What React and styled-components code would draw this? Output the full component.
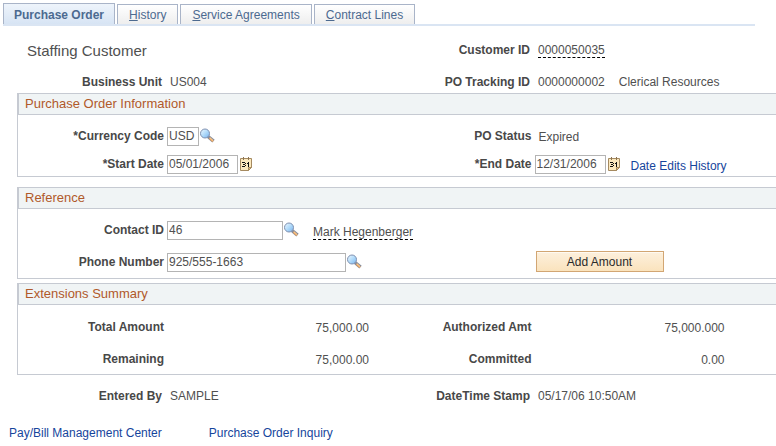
import React from 'react'
import styled, { createGlobalStyle } from 'styled-components'

const colors = {
  text: '#505050',
  label: '#484848',
  link: '#16459c',
  tab: '#4c6a90',
  heading: '#b0592a',
  border: '#c6cad2',
  field: '#b4b4b4',
}

const GlobalStyle = createGlobalStyle`
  * {
    box-sizing: border-box;
  }
  body {
    margin: 0;
    background: #fff;
    color: ${colors.text};
    font: 12px/16px "Liberation Sans", Arial, sans-serif;
  }
`

const Page = styled.div`
  overflow: hidden;
`

const Tabs = styled.nav`
  display: flex;
  align-items: flex-end;
  gap: 2px;
  margin: 3px 21px 0 3px;
  border-bottom: 2px solid #dae5f3;
`

const Tab = styled.a`
  height: ${props => (props.$active ? 21 : 20)}px;
  padding: ${props => (props.$active ? '3px 10px 0' : '2px 11px 0')};
  border: 1px solid #a9b4c8;
  border-bottom: 0;
  background: ${props =>
    props.$active
      ? 'linear-gradient(#eef4fb, #d7e4f4)'
      : 'linear-gradient(#ffffff, #eeeeee)'};
  color: ${colors.tab};
  font-weight: ${props => (props.$active ? 700 : 400)};
  text-decoration: none;
  white-space: nowrap;
`

const Content = styled.main`
  padding-left: 17px;
`

const Row = styled.div`
  display: grid;
  grid-template-columns: 148px 220fr 148px 243fr;
  align-items: center;
  min-height: 22px;
`

const Header = styled.header`
  display: grid;
  gap: 10px;
  padding: 13px 0 0;
`

const Title = styled.h1`
  grid-column: span 2;
  margin: 0;
  padding: 1px 0 0 10px;
  font-size: 15px;
  font-weight: 400;
  line-height: 20px;
`

const Label = styled.label`
  padding-right: ${props => (props.$plain ? 3 : 2)}px;
  color: ${colors.label};
  font-weight: 700;
  text-align: right;
  white-space: nowrap;
`

const Field = styled.div`
  display: flex;
  align-items: center;
  padding-left: ${props => (props.$text ? 5 : 1)}px;
  padding-top: ${props => (props.$low ? 2 : 0)}px;
  white-space: nowrap;
`

const Spaced = styled.span`
  margin-left: ${props => props.$space || 14}px;
  padding-top: ${props => (props.$low ? 4 : 0)}px;
`

const Dashed = styled.span`
  display: inline-block;
  border-bottom: 1px dashed #000;
  line-height: 14px;
`

const Panel = styled.section`
  margin-bottom: ${props => props.$gap}px;
  border: 1px solid ${colors.border};
  border-right: 0;
`

const PanelTitle = styled.h2`
  height: 21px;
  margin: 0;
  padding: 2px 0 0 6px;
  border-left: 1px solid ${colors.border};
  border-bottom: 1px solid ${colors.border};
  background: #f0f4f5;
  color: ${colors.heading};
  font-size: 13px;
  font-weight: 400;
`

const PanelBody = styled.div`
  display: grid;
  gap: ${props => props.$gap}px;
  padding: ${props => props.$top || 10}px 0 ${props => props.$bottom}px;
`

const TextInput = styled.input`
  width: ${props => props.$width}px;
  height: 19px;
  padding: 0 1px;
  border: 1px solid ${colors.field};
  background: #fff;
  color: ${colors.text};
  font: inherit;
`

const IconButton = styled.button`
  display: flex;
  padding: 0;
  border: 0;
  background: none;
`

const ActionButton = styled.button`
  width: 128px;
  height: 21px;
  margin-left: 1px;
  padding: 0;
  border: 1px solid #d2a673;
  background: linear-gradient(#fdf0dd, #fae3bd);
  box-shadow: inset 0 1px #fffaf2;
  color: #2a2a2a;
  font: inherit;
`

const ButtonField = styled.div`
  align-self: start;
  display: flex;
  padding-left: 1px;
`

const Link = styled.a`
  color: ${colors.link};
  text-decoration: none;
`

const Amount = styled.output`
  width: ${props => props.$width}px;
  text-align: right;
`

const FooterLinks = styled.footer`
  display: flex;
  gap: 47px;
  padding: 18px 9px 4px;
`

const LookupIcon = () => (
  <svg width="16" height="16" viewBox="0 0 16 16" aria-hidden="true">
    <defs>
      <linearGradient id="lens" x1="0" y1="0" x2="1" y2="1">
        <stop offset="0" stopColor="#eef8ff" />
        <stop offset="0.5" stopColor="#b2dbfa" />
        <stop offset="1" stopColor="#75b2ee" />
      </linearGradient>
    </defs>
    <path d="M9 8.500l5.500 4.700" stroke="#858c9c" strokeWidth="3.600" />
    <path d="M10.500 10l3.600 3.200" stroke="#eda660" strokeWidth="2" />
    <path d="M10.800 9.600l3.300 3" stroke="#f8dcae" strokeWidth="0.800" />
    <circle cx="6" cy="5.500" r="4.500" fill="url(#lens)" stroke="#7f90b0" />
  </svg>
)

const CalendarIcon = () => (
  <svg width="16" height="16" viewBox="0 0 16 16" aria-hidden="true">
    <path d="M2.5 2.5h11v9l-3 3h-8z" fill="#fbe8bd" stroke="#a58a60" />
    <path d="M10.5 14.5v-3h3z" fill="#e2bf7d" stroke="#a58a60" />
    <path d="M5.500 1v3M10.500 1v3" stroke="#8d7554" />
    <path
      d="M4 6h3v1H4zM7 7h1v1H7zM5 8h2v1H5zM7 9h1v1H7zM4 10h3v1H4zM10 6h1v5h-1zM9 7h1v1H9z"
      fill="#111"
      shapeRendering="crispEdges"
    />
  </svg>
)

const Lookup = ({ label }) => (
  <IconButton type="button" aria-label={label}>
    <LookupIcon />
  </IconButton>
)

const Calendar = ({ label }) => (
  <IconButton type="button" aria-label={label}>
    <CalendarIcon />
  </IconButton>
)

const tabs = ['History', 'Service Agreements', 'Contract Lines']

const App = () => (
  <>
    <GlobalStyle />
    <Page>
      <Tabs>
        <Tab href="#order" $active>Purchase Order</Tab>
        {tabs.map(name => (
          <Tab href="#tab" key={name}>
            <u>{name[0]}</u>
            {name.slice(1)}
          </Tab>
        ))}
      </Tabs>
      <Content>
        <Header>
          <Row>
            <Title>Staffing Customer</Title>
            <Label as="span" $plain>Customer ID</Label>
            <Field $text><Dashed>0000050035</Dashed></Field>
          </Row>
          <Row>
            <Label as="span" $plain>Business Unit</Label>
            <Field $text>US004</Field>
            <Label as="span" $plain>PO Tracking ID</Label>
            <Field $text>
              0000000002
              <Spaced>Clerical Resources</Spaced>
            </Field>
          </Row>
        </Header>
        <Panel $gap={10}>
          <PanelTitle>Purchase Order Information</PanelTitle>
          <PanelBody $gap={6} $bottom={1}>
            <Row>
              <Label htmlFor="currency">*Currency Code</Label>
              <Field>
                <TextInput id="currency" defaultValue="USD" $width={32} />
                <Lookup label="Look up currency code" />
              </Field>
              <Label as="span">PO Status</Label>
              <Field $text $low>Expired</Field>
            </Row>
            <Row>
              <Label htmlFor="start">*Start Date</Label>
              <Field>
                <TextInput id="start" defaultValue="05/01/2006" $width={71} />
                <Calendar label="Choose start date" />
              </Field>
              <Label htmlFor="end">*End Date</Label>
              <Field>
                <TextInput id="end" defaultValue="12/31/2006" $width={71} />
                <Calendar label="Choose end date" />
                <Spaced $space={9} $low><Link href="#edits">Date Edits History</Link></Spaced>
              </Field>
            </Row>
          </PanelBody>
        </Panel>
        <Panel $gap={4}>
          <PanelTitle>Reference</PanelTitle>
          <PanelBody $gap={10} $bottom={5}>
            <Row>
              <Label htmlFor="contact">Contact ID</Label>
              <Field>
                <TextInput id="contact" defaultValue="46" $width={116} />
                <Lookup label="Look up contact" />
                <Spaced $low><Dashed>Mark Hegenberger</Dashed></Spaced>
              </Field>
            </Row>
            <Row>
              <Label htmlFor="phone">Phone Number</Label>
              <Field>
                <TextInput id="phone" defaultValue="925/555-1663" $width={179} />
                <Lookup label="Look up phone number" />
              </Field>
              <span />
              <ButtonField><ActionButton type="button">Add Amount</ActionButton></ButtonField>
            </Row>
          </PanelBody>
        </Panel>
        <Panel $gap={10}>
          <PanelTitle>Extensions Summary</PanelTitle>
          <PanelBody $gap={10} $top={11} $bottom={4}>
            <Row>
              <Label as="span">Total Amount</Label>
              <Field $low><Amount $width={202}>75,000.00</Amount></Field>
              <Label as="span">Authorized Amt</Label>
              <Field $low><Amount $width={190}>75,000.000</Amount></Field>
            </Row>
            <Row>
              <Label as="span">Remaining</Label>
              <Field $low><Amount $width={202}>75,000.00</Amount></Field>
              <Label as="span">Committed</Label>
              <Field $low><Amount $width={190}>0.00</Amount></Field>
            </Row>
          </PanelBody>
        </Panel>
        <Row>
          <Label as="span" $plain>Entered By</Label>
          <Field $text>SAMPLE</Field>
          <Label as="span" $plain>DateTime Stamp</Label>
          <Field $text>05/17/06 10:50AM</Field>
        </Row>
      </Content>
      <FooterLinks>
        <Link href="#center">Pay/Bill Management Center</Link>
        <Link href="#inquiry">Purchase Order Inquiry</Link>
      </FooterLinks>
    </Page>
  </>
)

export default App
